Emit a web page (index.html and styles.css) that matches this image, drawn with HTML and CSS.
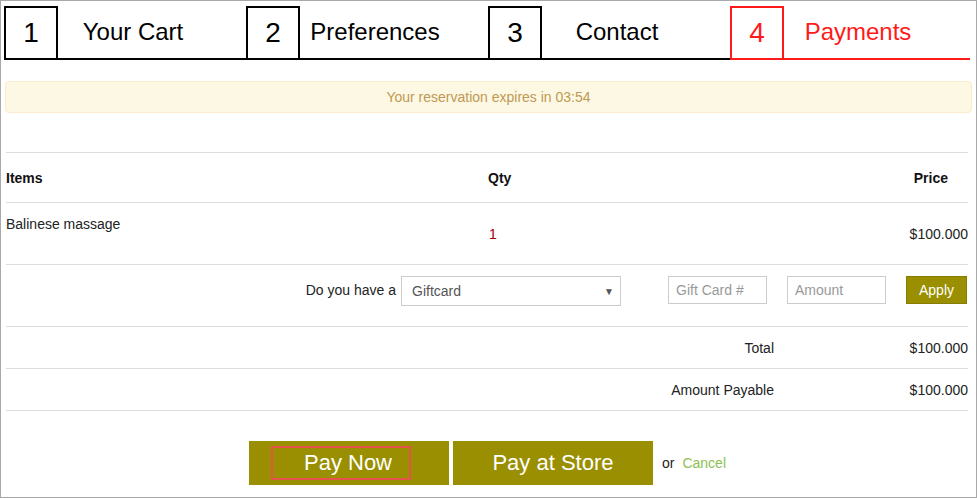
FILE: index.html
```html
<!DOCTYPE html>
<html>
<head>
<meta charset="utf-8">
<link rel="stylesheet" href="styles.css">
</head>
<body>
<div class="frame">
  <nav class="steps">
    <div class="step"><span class="num">1</span><span class="label">Your Cart</span></div>
    <div class="step"><span class="num">2</span><span class="label">Preferences</span></div>
    <div class="step"><span class="num">3</span><span class="label">Contact</span></div>
    <div class="step active"><span class="num">4</span><span class="label">Payments</span></div>
  </nav>

  <div class="alert">Your reservation expires in 03:54</div>

  <div class="cart">
    <div class="row head">
      <div class="c-item">Items</div>
      <div class="c-qty">Qty</div>
      <div class="c-price">Price</div>
    </div>
    <div class="row item">
      <div class="c-item name">Balinese massage</div>
      <div class="c-qty qty">1</div>
      <div class="c-price">$100.000</div>
    </div>
    <div class="row gift">
      <span class="gift-label">Do you have a</span>
      <div class="select"><span>Giftcard</span><span class="arrow">▼</span></div>
      <input class="field first" type="text" placeholder="Gift Card #">
      <input class="field" type="text" placeholder="Amount">
      <button class="apply">Apply</button>
    </div>
    <div class="row sum">
      <div class="sum-label">Total</div>
      <div class="sum-value">$100.000</div>
    </div>
    <div class="row sum">
      <div class="sum-label">Amount Payable</div>
      <div class="sum-value">$100.000</div>
    </div>
  </div>

  <div class="actions">
    <button class="pay pay-now"><span class="focus">Pay Now</span></button>
    <button class="pay">Pay at Store</button>
    <span class="or">or</span>
    <a class="cancel" href="#">Cancel</a>
  </div>
</div>
</body>
</html>
```

FILE: styles.css
```css
html, body {
  margin: 0;
  padding: 0;
  background: #fff;
}

body {
  font-family: "Liberation Sans", Arial, sans-serif;
  color: #222;
}

.frame {
  width: 977px;
  height: 498px;
  box-sizing: border-box;
  border: 1px solid #a9a9a9;
  padding: 5px 3px 0 3px;
}

/* Steps */
.steps {
  display: grid;
  grid-template-columns: 242px 242px 242px 240px;
}

.step {
  display: flex;
  height: 54px;
  color: #000;
}

.num {
  width: 54px;
  height: 54px;
  box-sizing: border-box;
  border: 2px solid #000;
  display: flex;
  align-items: center;
  justify-content: center;
  font-size: 28px;
}

.label {
  flex: 1;
  border-bottom: 2px solid #000;
  display: flex;
  align-items: center;
  justify-content: center;
  padding-right: 38px;
  font-size: 24px;
}

.step.active {
  color: #ff1a1a;
}

.step.active .num,
.step.active .label {
  border-color: #ff1a1a;
}

/* Alert */
.alert {
  margin: 21px 0 0 1px;
  width: 967px;
  height: 32px;
  box-sizing: border-box;
  background: #fcf8e3;
  border: 1px solid #faebcc;
  border-radius: 4px;
  color: #c09853;
  font-size: 14px;
  line-height: 30px;
  text-align: center;
}

/* Cart table */
.cart {
  margin: 39px 0 0 2px;
  width: 962px;
  border-top: 1px solid #ddd;
  font-size: 14px;
  color: #222;
}

.row {
  border-bottom: 1px solid #ddd;
  box-sizing: border-box;
}

.head,
.item {
  display: grid;
  grid-template-columns: 482px 1fr auto;
  align-items: center;
}

.head {
  height: 50px;
  font-weight: bold;
  color: #111;
}

.head .c-price {
  padding-right: 20px;
}

.item {
  height: 62px;
}

.item .name {
  align-self: start;
  padding-top: 13px;
}

.qty {
  color: #a00000;
  padding-left: 1px;
}

.c-price {
  text-align: right;
}

/* Giftcard row */
.gift {
  height: 62px;
  display: flex;
  justify-content: flex-end;
  align-items: flex-start;
  padding: 11px 1px 0 0;
}

.gift-label {
  line-height: 29px;
  margin-right: 5px;
  color: #222;
}

.select {
  width: 220px;
  height: 30px;
  box-sizing: border-box;
  border: 1px solid #ccc;
  display: flex;
  align-items: center;
  justify-content: space-between;
  padding: 0 6px 0 10px;
  color: #555;
  font-size: 14px;
}

.arrow {
  font-size: 10px;
  color: #555;
}

.field {
  width: 99px;
  height: 28px;
  box-sizing: border-box;
  border: 1px solid #ccc;
  padding: 0 7px;
  margin: 0 0 0 20px;
  font-family: "Liberation Sans", Arial, sans-serif;
  font-size: 14px;
  color: #555;
  outline: none;
}

.field.first {
  margin-left: 47px;
}

.field::placeholder {
  color: #999;
}

.apply {
  width: 61px;
  height: 28px;
  margin-left: 20px;
  box-sizing: border-box;
  background: #998f00;
  border: 1px solid #857c00;
  color: #fff;
  font-family: "Liberation Sans", Arial, sans-serif;
  font-size: 14px;
  padding: 0;
}

/* Sum rows */
.sum {
  display: grid;
  grid-template-columns: 1fr 194px;
  align-items: center;
  height: 42px;
  text-align: right;
}

/* Actions */
.actions {
  margin-top: 30px;
  display: flex;
  justify-content: center;
  align-items: center;
  padding-right: 2px;
}

.pay {
  width: 200px;
  height: 44px;
  border: none;
  background: #998f00;
  color: #fff;
  font-family: "Liberation Sans", Arial, sans-serif;
  font-size: 22px;
  padding: 0;
  margin-right: 4px;
}

.pay-now {
  display: flex;
  align-items: center;
  justify-content: flex-start;
  padding-left: 22px;
}

.focus {
  display: block;
  height: 34px;
  box-sizing: border-box;
  border: 2px solid #e5534b;
  padding: 0 17px 0 31px;
  line-height: 30px;
}

.or {
  margin-left: 5px;
  font-size: 14px;
  color: #222;
}

.cancel {
  margin-left: 8px;
  font-size: 14px;
  color: #8cc152;
  text-decoration: none;
}
```
